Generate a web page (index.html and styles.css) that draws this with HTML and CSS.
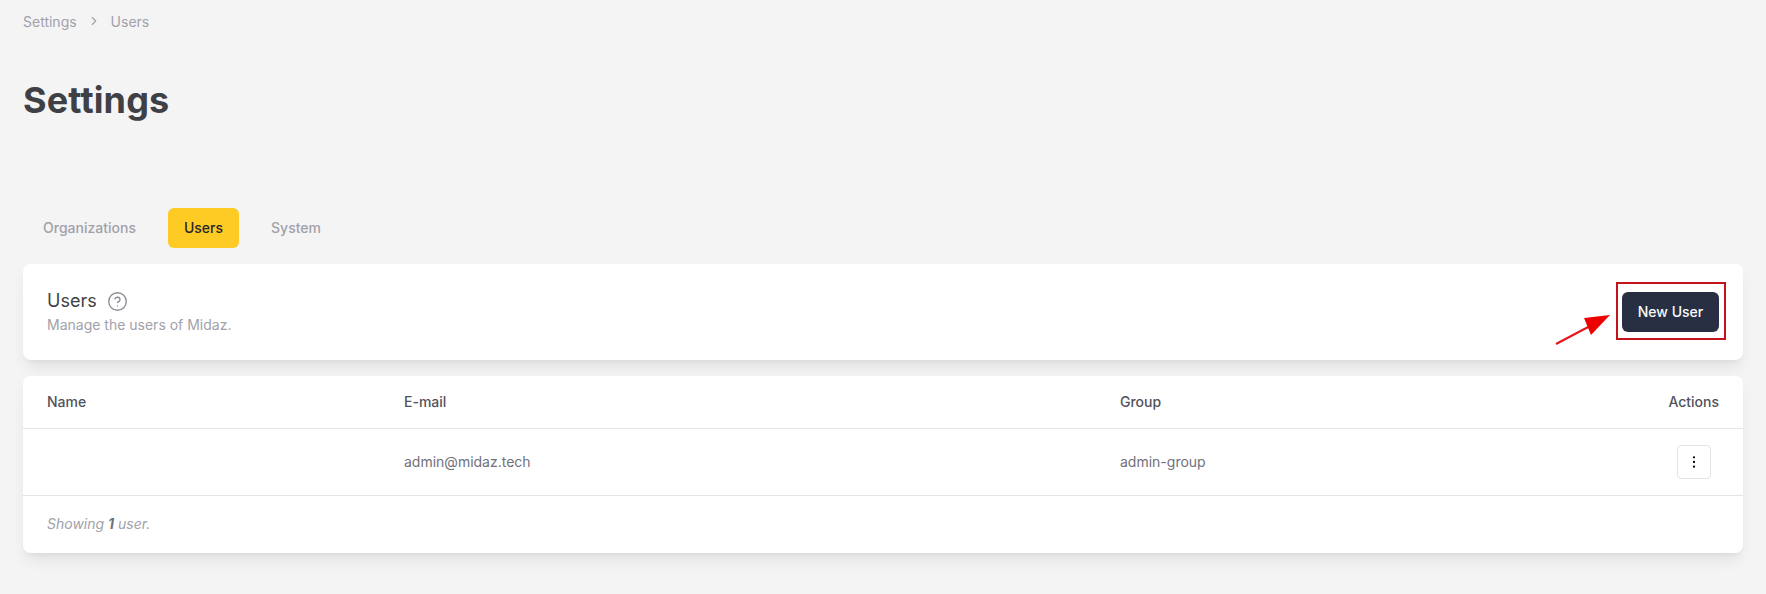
FILE: index.html
```html
<!DOCTYPE html>
<html lang="en">
<head>
    <meta charset="UTF-8">
    <title>Settings - Users</title>
    <link rel="stylesheet" href="styles.css">
</head>
<body>
    <div class="container">
        <nav class="breadcrumb">
            <span>Settings</span>
            <svg class="crumb-sep" width="14" height="14" viewBox="0 0 24 24" fill="none" stroke="currentColor" stroke-width="2" stroke-linecap="round" stroke-linejoin="round"><path d="m9 18 6-6-6-6"/></svg>
            <span>Users</span>
        </nav>

        <h1 class="page-title">Settings</h1>

        <div class="tabs">
            <button class="tab">Organizations</button>
            <button class="tab active">Users</button>
            <button class="tab">System</button>
        </div>

        <div class="card page-header">
            <div>
                <div class="header-title">
                    <h2>Users</h2>
                    <svg class="help-icon" width="21" height="21" viewBox="0 0 24 24" fill="none" stroke="currentColor" stroke-width="1.6" stroke-linecap="round" stroke-linejoin="round"><circle cx="12" cy="12" r="10"/><path d="M9.1 9a3 3 0 0 1 5.8 1c0 2-3 3-3 3"/><path d="M12 17h.01"/></svg>
                </div>
                <p class="header-sub">Manage the users of Midaz.</p>
            </div>
            <button class="btn-primary">New User</button>
        </div>

        <div class="card table-card">
            <table>
                <thead>
                    <tr>
                        <th class="col-name">Name</th>
                        <th class="col-email">E-mail</th>
                        <th>Group</th>
                        <th class="align-right">Actions</th>
                    </tr>
                </thead>
                <tbody>
                    <tr>
                        <td></td>
                        <td>admin@midaz.tech</td>
                        <td>admin-group</td>
                        <td class="align-right">
                            <button class="btn-icon">
                                <svg width="16" height="16" viewBox="0 0 24 24" fill="none" stroke="#09090b" stroke-width="3.4" stroke-linecap="round"><path d="M12 5h.01M12 12h.01M12 19h.01"/></svg>
                            </button>
                        </td>
                    </tr>
                </tbody>
            </table>
            <div class="table-footer">Showing <b>1</b> user.</div>
        </div>
    </div>

    <!-- annotation drawn over the screenshot -->
    <div class="mark-box"></div>
    <svg class="mark-arrow" width="70" height="50" viewBox="0 0 70 50"><path d="M2 44 L38 25" stroke="#e8141c" stroke-width="2" fill="none"/><path d="M56 15 L30 18 L37 35 Z" fill="#ee0000"/></svg>
</body>
</html>
```

FILE: styles.css
```css
* {
    box-sizing: border-box;
}

body {
    margin: 0;
    background: #f4f4f5;
    font-family: Inter, "Liberation Sans", sans-serif;
    color: #3f3f46;
}

.container {
    padding: 12px 23px 42px;
}

.breadcrumb {
    display: flex;
    align-items: center;
    gap: 10px;
    height: 18px;
    font-size: 14px;
    color: #a1a1aa;
}

.crumb-sep {
    color: #a1a1aa;
}

.page-title {
    margin: 43px 0 0;
    font-size: 36px;
    line-height: 54px;
    font-weight: 700;
    letter-spacing: 0.15px;
    color: #3f3f46;
}

.tabs {
    display: flex;
    gap: 16px;
    margin-top: 81px;
    padding: 0 4px;
}

.tab {
    height: 40px;
    padding: 0 16px 2px;
    border: none;
    border-radius: 6px;
    background: transparent;
    font: 500 14px Inter, sans-serif;
    color: #a1a1aa;
}

.tab.active {
    background: #fdcb24;
    color: #27272a;
}

.card {
    background: white;
    border-radius: 8px;
    box-shadow: 0 10px 15px -3px rgba(0,0,0,0.08), 0 4px 6px -4px rgba(0,0,0,0.08);
}

.page-header {
    display: flex;
    justify-content: space-between;
    align-items: center;
    height: 96px;
    margin-top: 16px;
    padding: 0 24px;
}

.header-title {
    display: flex;
    align-items: center;
    gap: 10px;
}

.header-title h2 {
    margin: 0;
    font-size: 18px;
    line-height: 24px;
    font-weight: 400;
    color: #3f3f46;
}

.help-icon {
    color: #8f8f97;
}

.header-sub {
    margin: 2px 0 0;
    font-size: 14px;
    line-height: 20px;
    color: #a1a1aa;
}

.btn-primary {
    width: 97px;
    height: 40px;
    padding: 0 0 2px;
    border: none;
    border-radius: 6px;
    background: #282f42;
    font: 500 14px Inter, sans-serif;
    color: #f8fafc;
}

.table-card {
    margin-top: 16px;
}

table {
    width: 100%;
    border-collapse: collapse;
    font-size: 14px;
}

th, td {
    padding: 0 24px;
    text-align: left;
    border-bottom: 1px solid #e4e4e7;
}

th {
    height: 52px;
    font-weight: 500;
    color: #52525b;
}

td {
    height: 67px;
    color: #71717a;
}

.col-name {
    width: 357px;
}

.col-email {
    width: 716px;
}

th.align-right, td.align-right {
    text-align: right;
}

.btn-icon {
    display: inline-flex;
    align-items: center;
    justify-content: center;
    width: 34px;
    height: 34px;
    margin: 0 8px 0 0;
    padding: 0;
    vertical-align: middle;
    border: 1px solid #e4e4e7;
    border-radius: 4px;
    background: white;
}

.table-footer {
    height: 57px;
    padding: 0 24px;
    line-height: 55px;
    font-size: 14px;
    font-style: italic;
    color: #a1a1aa;
}

.table-footer b {
    color: #71717a;
}

.mark-box {
    position: absolute;
    left: 1616px;
    top: 282px;
    width: 110px;
    height: 58px;
    border: 2px solid #c4121a;
}

.mark-arrow {
    position: absolute;
    left: 1554px;
    top: 300px;
}
```
